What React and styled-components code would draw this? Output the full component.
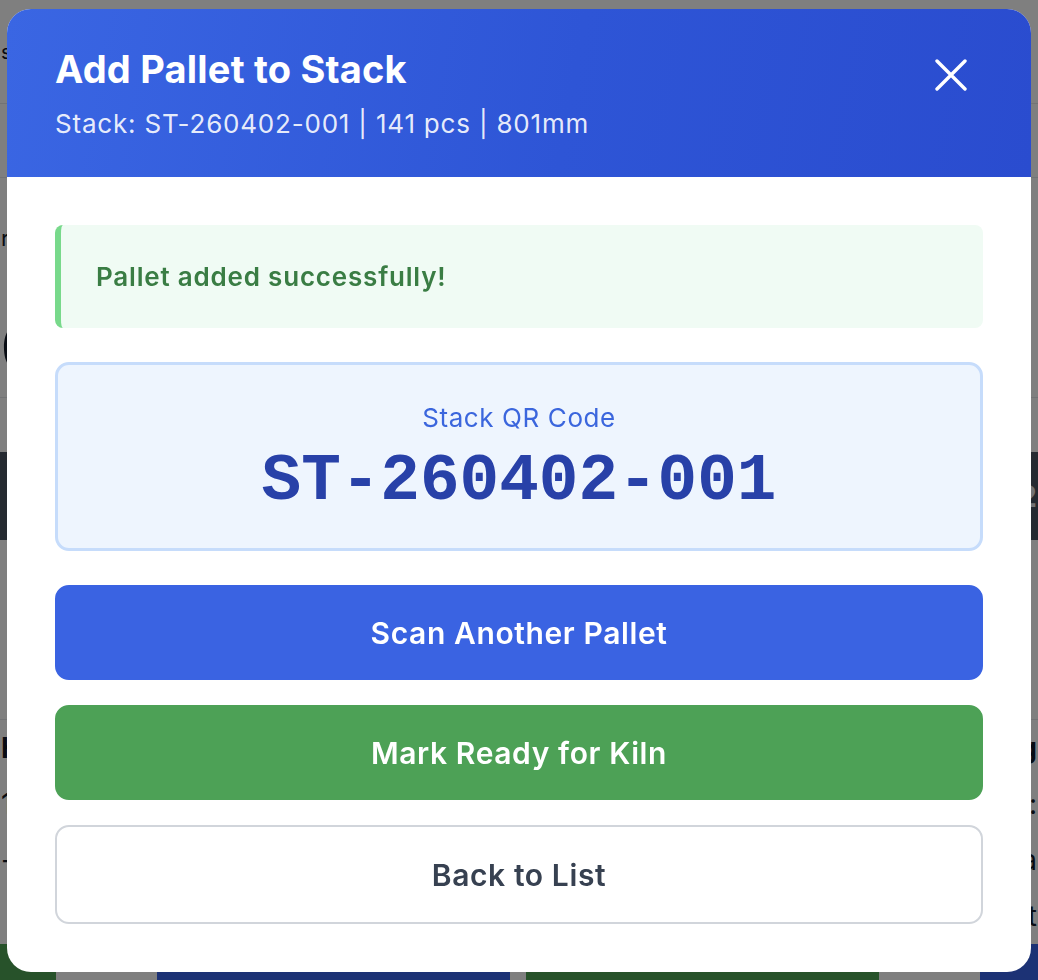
import React from "react";
import styled, { createGlobalStyle } from "styled-components";

const GlobalStyle = createGlobalStyle`
  html, body {
    margin: 0;
    padding: 0;
    background: #ffffff;
    font-family: Inter, "Noto Sans", "Liberation Sans", sans-serif;
  }
  * { box-sizing: border-box; }
`;

/* page behind the modal */
const Page = styled.div`
  width: 100%;
  height: 980px;
  overflow: hidden;
  display: flex;
  flex-direction: column;
  background: #ffffff;
  color: #111827;
`;

const PageSection = styled.div`
  height: ${({ $h }) => $h}px;
  flex-shrink: 0;
  display: flex;
  align-items: center;
  justify-content: space-between;
  padding: 0 1px;
  border-bottom: ${({ $line }) => ($line ? "1px solid #e5e7eb" : "none")};
  font-size: ${({ $size }) => $size || 20}px;
  font-weight: ${({ $weight }) => $weight || 400};
  background: ${({ $bg }) => $bg || "transparent"};
  color: ${({ $color }) => $color || "#111827"};
`;

const ActionBar = styled.div`
  display: grid;
  grid-template-columns: 56px 101px 353px 16px 353px 101px 1fr;
  height: 40px;
  margin-top: auto;
`;

const BarCell = styled.div`
  background: ${({ $bg }) => $bg || "transparent"};
`;

const Overlay = styled.div`
  position: fixed;
  inset: 0;
  background: rgba(0, 0, 0, 0.5);
  display: flex;
  justify-content: center;
  align-items: flex-start;
  padding-top: 9px;
`;

const Modal = styled.div`
  width: 1024px;
  background: #ffffff;
  border-radius: 24px;
  overflow: hidden;
  display: flex;
  flex-direction: column;
`;

const Header = styled.div`
  height: 168px;
  display: flex;
  justify-content: space-between;
  align-items: flex-start;
  padding: 35px 48px 0 48px;
  background: linear-gradient(100deg, #3a66e3 0%, #2e55d6 55%, #2a4ccf 100%);
  color: #ffffff;
`;

const TitleBlock = styled.div`
  display: flex;
  flex-direction: column;
  gap: 14px;
`;

const Title = styled.h2`
  margin: 0;
  font-size: 38px;
  line-height: 50px;
  font-weight: 700;
  letter-spacing: 0.2px;
`;

const Subtitle = styled.div`
  font-size: 26px;
  line-height: 32px;
  font-weight: 400;
  letter-spacing: 0.8px;
  color: rgba(255, 255, 255, 0.9);
`;

const CloseButton = styled.button`
  width: 32px;
  height: 32px;
  margin: 15px 16px 0 0;
  padding: 0;
  border: none;
  background: transparent;
  display: flex;
  align-items: center;
  justify-content: center;
  cursor: pointer;
`;

const Body = styled.div`
  padding: 48px;
  display: flex;
  flex-direction: column;
`;

const Alert = styled.div`
  height: 103px;
  display: flex;
  align-items: center;
  padding-left: 35px;
  border-left: 6px solid #78d98b;
  border-radius: 8px;
  background: #f0fbf4;
  color: #3a7d44;
  font-size: 26px;
  font-weight: 600;
  letter-spacing: 0.8px;
  margin-bottom: 34px;
`;

const CodeBox = styled.div`
  height: 189px;
  display: flex;
  flex-direction: column;
  align-items: center;
  padding-top: 37px;
  border: 3px solid #c6dcfb;
  border-radius: 14px;
  background: #eef5fe;
  margin-bottom: 34px;
`;

const CodeLabel = styled.div`
  font-size: 26px;
  line-height: 32px;
  letter-spacing: 0.6px;
  color: #3b66dd;
`;

const CodeValue = styled.div`
  margin-top: 12px;
  font-family: "Liberation Mono", "DejaVu Sans Mono", monospace;
  font-size: 66px;
  line-height: 72px;
  font-weight: 700;
  color: #2841a8;
`;

const Actions = styled.div`
  display: flex;
  flex-direction: column;
  gap: 25px;
`;

const variants = {
  primary: { bg: "#3a63e2", color: "#ffffff", border: "#3a63e2" },
  success: { bg: "#4da156", color: "#ffffff", border: "#4da156" },
  outline: { bg: "#ffffff", color: "#374151", border: "#d1d5db" },
};

const ActionButton = styled.button`
  height: ${({ $variant }) => ($variant === "outline" ? 99 : 95)}px;
  width: 100%;
  border-radius: 14px;
  border: 2px solid ${({ $variant }) => variants[$variant].border};
  background: ${({ $variant }) => variants[$variant].bg};
  color: ${({ $variant }) => variants[$variant].color};
  font-family: Inter, "Noto Sans", "Liberation Sans", sans-serif;
  font-size: 30px;
  font-weight: 600;
  letter-spacing: 0.6px;
  cursor: pointer;
`;

const CloseIcon = () => (
  <svg width="32" height="32" viewBox="0 0 32 32" fill="none">
    <path d="M2 2 L30 30 M30 2 L2 30" stroke="#ffffff" strokeWidth="3.4" strokeLinecap="round" />
  </svg>
);

const BackgroundPage = () => (
  <Page>
    <PageSection $h={104} $line>
      <span>s</span>
    </PageSection>
    <PageSection $h={74} $line />
    <PageSection $h={120} $size={22}>
      <span>r</span>
    </PageSection>
    <PageSection $h={100} $size={64} $weight={700} $line>
      <span>0</span>
    </PageSection>
    <PageSection $h={54} />
    <PageSection $h={88} $bg="#4b5563" $color="#e5e7eb" $size={30} $weight={700}>
      <span />
      <span>2</span>
    </PageSection>
    <PageSection $h={180} $line />
    <PageSection $h={56} $size={28} $weight={700}>
      <span>H</span>
      <span>g</span>
    </PageSection>
    <PageSection $h={56} $size={28}>
      <span>1</span>
      <span>u:</span>
    </PageSection>
    <PageSection $h={56} $size={28}>
      <span>-</span>
      <span>a</span>
    </PageSection>
    <PageSection $h={56} $size={28}>
      <span />
      <span>t</span>
    </PageSection>
    <ActionBar>
      <BarCell $bg="#4ea454" />
      <BarCell />
      <BarCell $bg="#3864ea" />
      <BarCell />
      <BarCell $bg="#4ea454" />
      <BarCell />
      <BarCell $bg="#3864ea" />
    </ActionBar>
  </Page>
);

export default function App() {
  return (
    <>
      <GlobalStyle />
      <BackgroundPage />
      <Overlay>
        <Modal>
          <Header>
            <TitleBlock>
              <Title>Add Pallet to Stack</Title>
              <Subtitle>Stack: ST-260402-001 | 141 pcs | 801mm</Subtitle>
            </TitleBlock>
            <CloseButton aria-label="Close">
              <CloseIcon />
            </CloseButton>
          </Header>
          <Body>
            <Alert>Pallet added successfully!</Alert>
            <CodeBox>
              <CodeLabel>Stack QR Code</CodeLabel>
              <CodeValue>ST-260402-001</CodeValue>
            </CodeBox>
            <Actions>
              <ActionButton $variant="primary">Scan Another Pallet</ActionButton>
              <ActionButton $variant="success">Mark Ready for Kiln</ActionButton>
              <ActionButton $variant="outline">Back to List</ActionButton>
            </Actions>
          </Body>
        </Modal>
      </Overlay>
    </>
  );
}
